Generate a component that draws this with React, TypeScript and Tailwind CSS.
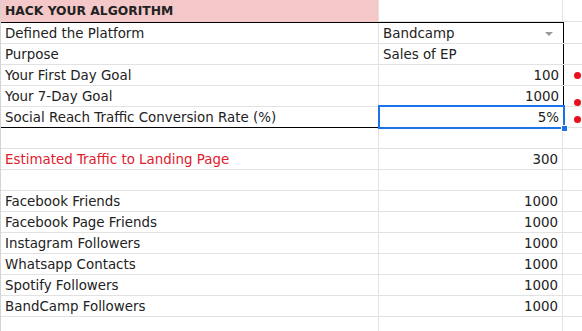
import React from 'react';

type Row = {
  label: string;
  value?: string;
  red?: boolean;
};

const followers: Row[] = [
  { label: 'Facebook Friends', value: '1000' },
  { label: 'Facebook Page Friends', value: '1000' },
  { label: 'Instagram Followers', value: '1000' },
  { label: 'Whatsapp Contacts', value: '1000' },
  { label: 'Spotify Followers', value: '1000' },
  { label: 'BandCamp Followers', value: '1000' },
];

const Dot = ({ shift = '' }: { shift?: string }) => (
  <span className={`block w-[7px] h-[7px] rounded-full bg-[#e8101c] ${shift}`} />
);

// one plain sheet row: label | value | side column
const SheetRow = ({ row }: { row: Row }) => (
  <div className="flex h-[21px] border-b border-[#e2e2e2]">
    <div
      className={`w-[378px] shrink-0 px-[4px] pt-[1px] flex items-center border-r border-[#e2e2e2] ${
        row.red ? 'text-[#e0202c]' : ''
      }`}
    >
      {row.label}
    </div>
    <div className="w-[184px] shrink-0 px-[4px] pt-[1px] flex items-center justify-end border-r border-[#e2e2e2]">
      {row.value}
    </div>
    <div className="flex-1" />
  </div>
);

const App = () => {
  return (
    <div
      className="w-[582px] h-[331px] overflow-hidden bg-white text-[#222] text-[13.4px] leading-none border-l border-[#d4d4d4]"
      style={{ fontFamily: '"DejaVu Sans", "Open Sans", sans-serif' }}
    >
      {/* title row */}
      <div className="flex h-[22px]">
        <div className="w-[378px] shrink-0 px-[4px] pt-[1px] flex items-center bg-[#f4c8c8] font-bold text-[12.3px] border-r border-[#e2e2e2]">
          HACK YOUR ALGORITHM
        </div>
        <div className="w-[184px] shrink-0 border-r border-[#e2e2e2] border-b" />
        <div className="flex-1 border-b border-[#e2e2e2]" />
      </div>

      {/* input block with black outline */}
      <div className="flex">
        <div className="w-[563px] shrink-0 border-y border-black">
          <div className="flex h-[21px] border-b border-[#e2e2e2]">
            <div className="w-[378px] shrink-0 px-[4px] pt-[1px] flex items-center border-r border-[#e2e2e2]">
              Defined the Platform
            </div>
            <div className="flex-1 px-[4px] pt-[1px] flex items-center justify-between border-r border-black">
              <span>Bandcamp</span>
              <span className="mr-[6px] w-0 h-0 border-l-[4px] border-r-[4px] border-t-[4px] border-l-transparent border-r-transparent border-t-[#9a9a9a]" />
            </div>
          </div>
          <div className="flex h-[21px] border-b border-[#e2e2e2]">
            <div className="w-[378px] shrink-0 px-[4px] pt-[1px] flex items-center border-r border-[#e2e2e2]">
              Purpose
            </div>
            <div className="flex-1 px-[4px] pt-[1px] flex items-center border-r border-black">Sales of EP</div>
          </div>
          <div className="flex h-[21px] border-b border-[#e2e2e2]">
            <div className="w-[378px] shrink-0 px-[4px] pt-[1px] flex items-center border-r border-[#e2e2e2]">
              Your First Day Goal
            </div>
            <div className="flex-1 px-[4px] pt-[1px] flex items-center justify-end border-r border-black">100</div>
          </div>
          <div className="flex h-[21px] border-b border-[#e2e2e2]">
            <div className="w-[378px] shrink-0 px-[4px] pt-[1px] flex items-center border-r border-[#e2e2e2]">
              Your 7-Day Goal
            </div>
            <div className="flex-1 px-[4px] pt-[1px] flex items-center justify-end border-r border-black">1000</div>
          </div>
          <div className="flex h-[20px]">
            <div className="w-[378px] shrink-0 px-[4px] pt-[1px] flex items-center border-r border-[#e2e2e2]">
              Social Reach Traffic Conversion Rate (%)
            </div>
            <div className="relative flex-1 px-[4px] pt-[1px] flex items-center justify-end border-r border-black">
              5%
              {/* active cell */}
              <div className="absolute left-[-1px] right-[-2px] top-[-2px] bottom-[-2px] border-2 border-[#1a73e8]" />
              <div className="absolute right-[-5px] bottom-[-5px] w-[7px] h-[7px] bg-[#1a73e8] border border-white" />
            </div>
          </div>
        </div>
        {/* comment markers */}
        <div className="flex-1 flex flex-col">
          <div className="h-[22px] border-b border-[#e2e2e2]" />
          <div className="h-[21px] border-b border-[#e2e2e2]" />
          <div className="h-[21px] border-b border-[#e2e2e2] flex items-center pl-[10px]">
            <Dot />
          </div>
          <div className="h-[21px] border-b border-[#e2e2e2] flex items-center pl-[10px]">
            <Dot shift="translate-y-[6px]" />
          </div>
          <div className="h-[21px] border-b border-[#e2e2e2] flex items-center pl-[10px]">
            <Dot shift="translate-y-[2px]" />
          </div>
        </div>
      </div>

      <SheetRow row={{ label: '' }} />
      <SheetRow row={{ label: 'Estimated Traffic to Landing Page', value: '300', red: true }} />
      <SheetRow row={{ label: '' }} />
      {followers.map((r) => (
        <SheetRow key={r.label} row={r} />
      ))}
      <SheetRow row={{ label: '' }} />
    </div>
  );
};

export default App;
